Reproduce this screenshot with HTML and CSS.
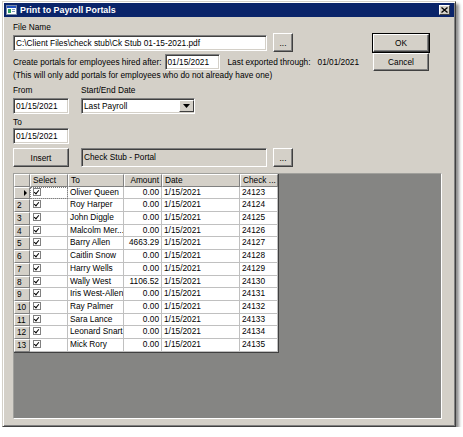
FILE: index.html
```html
<!DOCTYPE html>
<html lang="en">
<head>
  <meta charset="UTF-8">
  <meta name="viewport" content="width=device-width, initial-scale=1.0">
  <title>Print to Payroll Portals</title>
  <link rel="stylesheet" href="styles.css">
</head>
<body>
  <div class="window">
    <div class="titlebar">
      <svg class="app-icon" width="11" height="10" viewBox="0 0 11 10">
        <rect x="0.5" y="0.5" width="10" height="9" fill="#fff" stroke="#7a8aa8"/>
        <rect x="1" y="1" width="9" height="2" fill="#2050c0"/>
        <rect x="2" y="4" width="3" height="4" fill="#30a060"/>
        <rect x="6" y="4" width="3" height="1" fill="#8098c0"/>
        <rect x="6" y="6" width="3" height="1" fill="#8098c0"/>
      </svg>
      <span class="title">Print to Payroll Portals</span>
      <button class="close-btn">
        <svg width="7" height="6" viewBox="0 0 7 6">
          <path d="M0.5 0.5 L6.5 5.5 M6.5 0.5 L0.5 5.5" stroke="#000" stroke-width="1.3"/>
        </svg>
      </button>
    </div>

    <div class="content">
      <div class="top">
        <div class="top-main">
          <div class="label">File Name</div>
          <div class="file-row">
            <div class="field file-field">C:\Client Files\check stub\Ck Stub 01-15-2021.pdf</div>
            <button class="btn dots">...</button>
          </div>
          <div class="hire-row">
            <span>Create portals for employees hired after:</span>
            <div class="field date-field hire-date">01/15/2021</div>
            <span class="last-label">Last exported through:</span>
            <span class="last-date">01/01/2021</span>
          </div>
          <div class="note">(This will only add portals for employees who do not already have one)</div>

          <div class="range">
            <div class="label">From</div>
            <div class="label">Start/End Date</div>
            <div class="field date-field">01/15/2021</div>
            <div class="field select">
              <span>Last Payroll</span>
              <span class="select-arrow">
                <svg width="7" height="4" viewBox="0 0 7 4"><path d="M0 0 H7 L3.5 4 Z" fill="#000"/></svg>
              </span>
            </div>
          </div>
          <div class="label to-label">To</div>
          <div class="field date-field to-field">01/15/2021</div>

          <div class="insert-row">
            <button class="btn insert-btn">Insert</button>
            <div class="field template-field">Check Stub - Portal</div>
            <button class="btn dots">...</button>
          </div>
        </div>

        <div class="actions">
          <button class="btn default-btn">OK</button>
          <button class="btn">Cancel</button>
        </div>
      </div>

      <div class="grid-area">
        <div class="grid">
          <div class="hcell"></div>
          <div class="hcell">Select</div>
          <div class="hcell">To</div>
          <div class="hcell num">Amount</div>
          <div class="hcell">Date</div>
          <div class="hcell">Check ...</div>

          <div class="rcell current"><span class="pointer"></span></div>
          <div class="cell focus"><span class="check"></span></div>
          <div class="cell">Oliver Queen</div><div class="cell num">0.00</div><div class="cell">1/15/2021</div><div class="cell">24123</div>

          <div class="rcell">2</div><div class="cell"><span class="check"></span></div>
          <div class="cell">Roy Harper</div><div class="cell num">0.00</div><div class="cell">1/15/2021</div><div class="cell">24124</div>

          <div class="rcell">3</div><div class="cell"><span class="check"></span></div>
          <div class="cell">John Diggle</div><div class="cell num">0.00</div><div class="cell">1/15/2021</div><div class="cell">24125</div>

          <div class="rcell">4</div><div class="cell"><span class="check"></span></div>
          <div class="cell">Malcolm Mer...</div><div class="cell num">0.00</div><div class="cell">1/15/2021</div><div class="cell">24126</div>

          <div class="rcell">5</div><div class="cell"><span class="check"></span></div>
          <div class="cell">Barry Allen</div><div class="cell num">4663.29</div><div class="cell">1/15/2021</div><div class="cell">24127</div>

          <div class="rcell">6</div><div class="cell"><span class="check"></span></div>
          <div class="cell">Caitlin Snow</div><div class="cell num">0.00</div><div class="cell">1/15/2021</div><div class="cell">24128</div>

          <div class="rcell">7</div><div class="cell"><span class="check"></span></div>
          <div class="cell">Harry Wells</div><div class="cell num">0.00</div><div class="cell">1/15/2021</div><div class="cell">24129</div>

          <div class="rcell">8</div><div class="cell"><span class="check"></span></div>
          <div class="cell">Wally West</div><div class="cell num">1106.52</div><div class="cell">1/15/2021</div><div class="cell">24130</div>

          <div class="rcell">9</div><div class="cell"><span class="check"></span></div>
          <div class="cell">Iris West-Allen</div><div class="cell num">0.00</div><div class="cell">1/15/2021</div><div class="cell">24131</div>

          <div class="rcell">10</div><div class="cell"><span class="check"></span></div>
          <div class="cell">Ray Palmer</div><div class="cell num">0.00</div><div class="cell">1/15/2021</div><div class="cell">24132</div>

          <div class="rcell">11</div><div class="cell"><span class="check"></span></div>
          <div class="cell">Sara Lance</div><div class="cell num">0.00</div><div class="cell">1/15/2021</div><div class="cell">24133</div>

          <div class="rcell">12</div><div class="cell"><span class="check"></span></div>
          <div class="cell">Leonard Snart</div><div class="cell num">0.00</div><div class="cell">1/15/2021</div><div class="cell">24134</div>

          <div class="rcell">13</div><div class="cell"><span class="check"></span></div>
          <div class="cell">Mick Rory</div><div class="cell num">0.00</div><div class="cell">1/15/2021</div><div class="cell">24135</div>
        </div>
      </div>
    </div>
  </div>
</body>
</html>
```

FILE: styles.css
```css
body {
  margin: 0;
  background-color: #fff;
  font-family: "Liberation Sans", Arial, sans-serif;
  font-size: 8.3px;
  color: #000;
}
.window {
  box-sizing: border-box;
  width: 454px;
  height: 426px;
  margin: 1px 0 0 2px;
  padding: 1px;
  display: flex;
  flex-direction: column;
  background-color: #d4d0c8;
  border: 1px solid;
  border-color: #d4d0c8 #404040 #404040 #d4d0c8;
  box-shadow: inset 1px 1px #fff, inset -1px -1px #808080, 3px 3px 3px rgba(0,0,0,0.45);
}
.titlebar {
  height: 14px;
  flex: none;
  display: flex;
  align-items: center;
  background-color: #0a246a;
  color: #fff;
  padding-left: 2px;
}
.app-icon {
  flex: none;
}
.title {
  margin-left: 3px;
  font-weight: bold;
  font-size: 8.9px;
}
.close-btn {
  margin-left: auto;
  margin-right: 4px;
  width: 11px;
  height: 10px;
  padding: 0;
  display: flex;
  align-items: center;
  justify-content: center;
  background-color: #d4d0c8;
  border: 1px solid;
  border-color: #fff #404040 #404040 #fff;
}
.content {
  flex: 1;
  display: flex;
  flex-direction: column;
  padding: 0 12px 6px 9px;
}
.top {
  display: flex;
}
.top-main {
  flex: 1;
}
.label {
  height: 10px;
  line-height: 10px;
  margin-top: 5px;
  white-space: nowrap;
}
.field {
  box-sizing: border-box;
  height: 16px;
  line-height: 12px;
  padding: 1px 2px;
  background-color: #fff;
  white-space: nowrap;
  overflow: hidden;
  border: 1px solid;
  border-color: #808080 #fff #fff #808080;
  box-shadow: inset 1px 1px #404040, inset -1px -1px #d4d0c8;
}
.btn {
  box-sizing: border-box;
  padding: 0;
  font-family: inherit;
  font-size: inherit;
  color: #000;
  background-color: #d4d0c8;
  border: 1px solid;
  border-color: #fff #404040 #404040 #fff;
  box-shadow: inset -1px -1px #808080;
}
.default-btn {
  outline: 1px solid #000;
  outline-offset: 0;
}
.file-row {
  display: flex;
  align-items: center;
  height: 19px;
  margin-top: 1px;
}
.file-field {
  width: 254px;
}
.dots {
  width: 20px;
  height: 19px;
  margin-left: 6px;
  line-height: 12px;
}
.hire-row {
  display: flex;
  align-items: center;
  height: 16px;
  margin-top: 2px;
  white-space: nowrap;
}
.date-field {
  width: 56px;
}
.hire-date {
  width: 55px;
  margin-left: 3px;
}
.last-label {
  margin-left: 8px;
}
.last-date {
  margin-left: 7px;
}
.note {
  height: 10px;
  line-height: 10px;
  white-space: nowrap;
}
.range {
  display: grid;
  grid-template-columns: 56px 114px;
  column-gap: 12px;
  row-gap: 3px;
}
.select {
  display: flex;
  align-items: center;
  padding-right: 0;
}
.select-arrow {
  margin-left: auto;
  width: 15px;
  height: 12px;
  display: flex;
  align-items: center;
  justify-content: center;
  box-sizing: border-box;
  background-color: #d4d0c8;
  border: 1px solid;
  border-color: #fff #404040 #404040 #fff;
}
.to-label {
  margin-top: 3px;
}
.to-field {
  margin-top: 1px;
}
.insert-row {
  display: flex;
  align-items: center;
  height: 19px;
  margin-top: 4px;
}
.insert-btn {
  width: 56px;
  height: 19px;
}
.template-field {
  width: 186px;
  height: 19px;
  margin-left: 12px;
  line-height: 14px;
  background-color: #d4d0c8;
}
.actions {
  width: 56px;
  margin: 17px 13px 0 0;
  display: flex;
  flex-direction: column;
  gap: 1px;
}
.actions .btn {
  height: 18px;
}
.grid-area {
  flex: 1;
  margin-top: 6px;
  background-color: #858583;
  border: 1px solid;
  border-color: #a0a09c #fff #fff #a0a09c;
}
.grid {
  display: grid;
  grid-template-columns: 16px 38px 56px 38px 78px 38px;
  grid-auto-rows: 12.7px;
  width: max-content;
  background-color: #fff;
  border-right: 1px solid #404040;
  border-bottom: 1px solid #404040;
}
.hcell,
.rcell {
  box-sizing: border-box;
  padding-left: 2px;
  line-height: 11px;
  background-color: #d4d0c8;
  white-space: nowrap;
  overflow: hidden;
  border-top: 1px solid #fff;
  border-left: 1px solid #fff;
  border-right: 1px solid #808080;
  border-bottom: 1px solid #808080;
}
.hcell.num {
  text-align: right;
  padding-right: 2px;
}
.rcell.current {
  display: flex;
  align-items: center;
  justify-content: flex-end;
  padding-right: 2px;
}
.pointer {
  width: 0;
  height: 0;
  border-top: 3px solid transparent;
  border-bottom: 3px solid transparent;
  border-left: 3px solid #000;
}
.cell {
  box-sizing: border-box;
  padding-left: 2px;
  line-height: 11px;
  white-space: nowrap;
  overflow: hidden;
  border-right: 1px solid #c0c0c0;
  border-bottom: 1px solid #c0c0c0;
}
.cell.num {
  text-align: right;
  padding-right: 2px;
}
.cell.focus {
  outline: 1px dotted #808080;
  outline-offset: -1px;
}
.check {
  display: inline-block;
  width: 8px;
  height: 8px;
  margin-top: 1px;
  margin-left: 1px;
  box-sizing: border-box;
  border: 1px solid #808080;
  position: relative;
  vertical-align: top;
}
/* tick mark drawn with two borders of a rotated box */
.check::after {
  content: "";
  position: absolute;
  left: 1px;
  top: 0;
  width: 2px;
  height: 4px;
  border-right: 1.5px solid #000;
  border-bottom: 1.5px solid #000;
  transform: rotate(40deg);
}
```
